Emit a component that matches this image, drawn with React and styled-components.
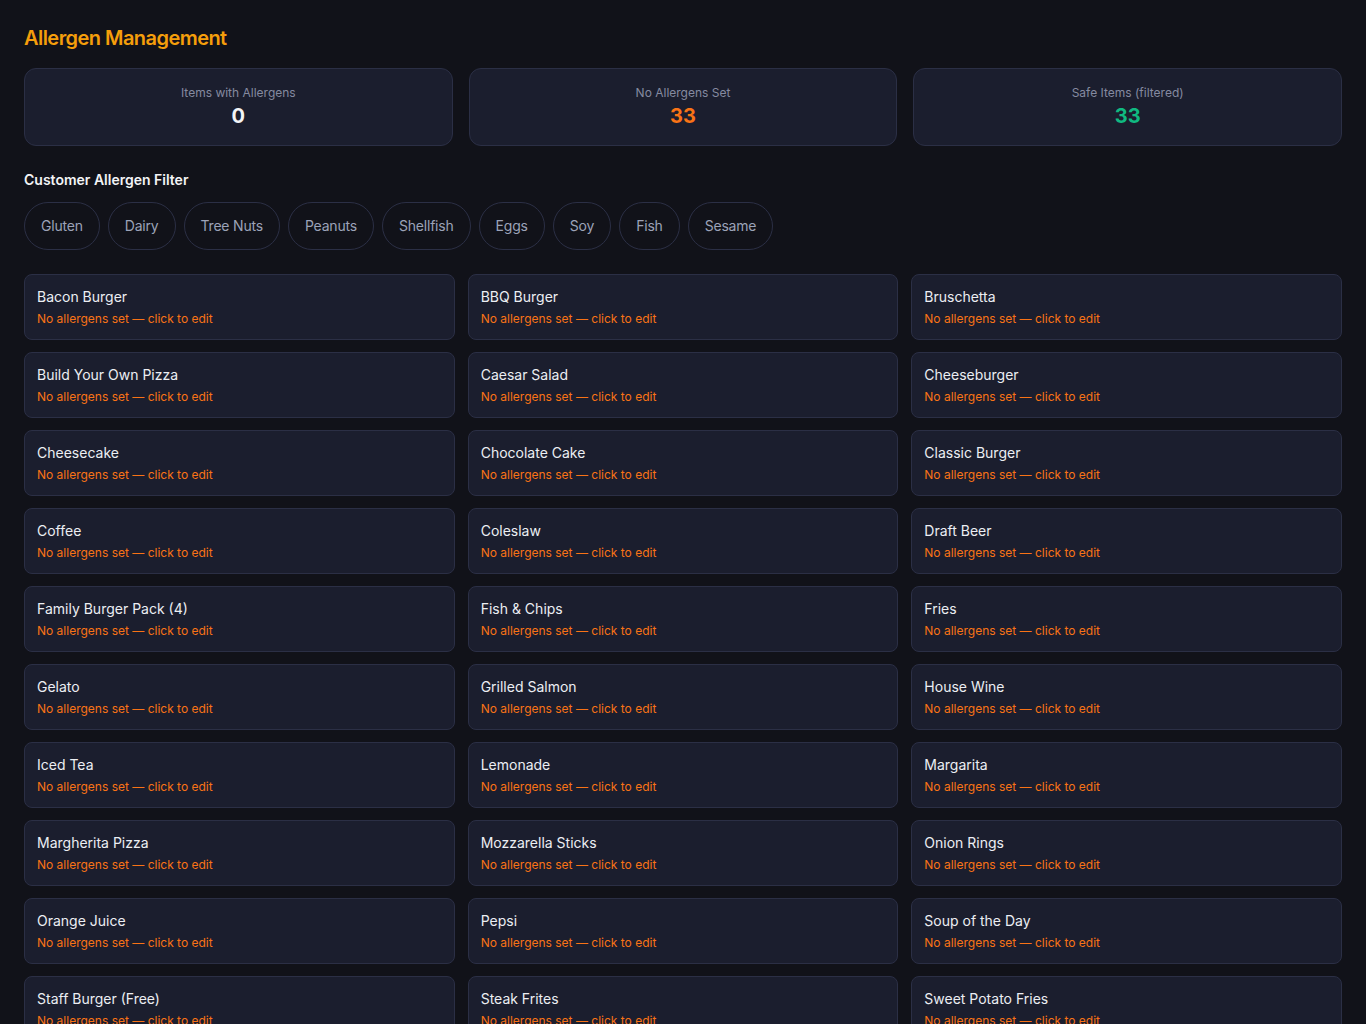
import React from "react";
import styled, { createGlobalStyle } from "styled-components";

const GlobalStyle = createGlobalStyle`
  html, body {
    margin: 0;
    padding: 0;
    background: #111219;
  }
  body {
    font-family: Inter, "Noto Sans", "Liberation Sans", sans-serif;
    color: #e5e7eb;
  }
  * { box-sizing: border-box; }
`;

const Page = styled.div`
  padding: 24px;
  min-height: 100vh;
  background: #111219;
`;

const Title = styled.h1`
  margin: 0 0 16px;
  font-size: 20px;
  line-height: 28px;
  font-weight: 600;
  letter-spacing: -0.55px;
  color: #f59e0b;
`;

const StatRow = styled.div`
  display: grid;
  grid-template-columns: repeat(3, 1fr);
  gap: 16px;
`;

const StatCard = styled.div`
  height: 78px;
  background: #1b1e2e;
  border: 1px solid #2b2f45;
  border-radius: 12px;
  display: flex;
  flex-direction: column;
  align-items: center;
  justify-content: center;
`;

const StatLabel = styled.div`
  font-size: 12px;
  line-height: 16px;
  color: #858aa0;
  margin-bottom: 1px;
`;

const StatValue = styled.div`
  font-size: 20px;
  line-height: 28px;
  font-weight: 700;
  color: ${(p) => p.color};
`;

const SectionTitle = styled.h2`
  margin: 24px 0 12px;
  font-size: 14px;
  line-height: 20px;
  font-weight: 600;
  color: #f3f4f6;
`;

const PillRow = styled.div`
  display: flex;
  flex-wrap: wrap;
  gap: 8px;
`;

const Pill = styled.button`
  height: 48px;
  padding: 0 16px 1px;
  border-radius: 999px;
  border: 1px solid #2b2f45;
  background: transparent;
  color: #9ca3b8;
  font-family: inherit;
  font-size: 14px;
  letter-spacing: -0.2px;
  cursor: pointer;
`;

const MenuGrid = styled.div`
  margin-top: 24px;
  display: grid;
  grid-template-columns: repeat(3, 1fr);
  gap: 12px 13px;
`;

const ItemCard = styled.div`
  height: 66px;
  padding: 12px;
  background: #1b1e2e;
  border: 1px solid #2b2f45;
  border-radius: 8px;
  cursor: pointer;
`;

const ItemName = styled.div`
  font-size: 14px;
  line-height: 20px;
  font-weight: 400;
  color: #eceef3;
  margin-bottom: 4px;
`;

const ItemNote = styled.div`
  font-size: 12px;
  line-height: 16px;
  color: #f97316;
`;

const allergens = ["Gluten", "Dairy", "Tree Nuts", "Peanuts", "Shellfish", "Eggs", "Soy", "Fish", "Sesame"];

const items = [
  "Bacon Burger", "BBQ Burger", "Bruschetta",
  "Build Your Own Pizza", "Caesar Salad", "Cheeseburger",
  "Cheesecake", "Chocolate Cake", "Classic Burger",
  "Coffee", "Coleslaw", "Draft Beer",
  "Family Burger Pack (4)", "Fish & Chips", "Fries",
  "Gelato", "Grilled Salmon", "House Wine",
  "Iced Tea", "Lemonade", "Margarita",
  "Margherita Pizza", "Mozzarella Sticks", "Onion Rings",
  "Orange Juice", "Pepsi", "Soup of the Day",
  "Staff Burger (Free)", "Steak Frites", "Sweet Potato Fries",
  "Tiramisu", "Veggie Burger", "Wings",
];

const stats = [
  { label: "Items with Allergens", value: 0, color: "#f3f4f6" },
  { label: "No Allergens Set", value: 33, color: "#f97316" },
  { label: "Safe Items (filtered)", value: 33, color: "#10b981" },
];

export default function App() {
  return (
    <Page>
      <GlobalStyle />
      <Title>Allergen Management</Title>
      <StatRow>
        {stats.map((s) => (
          <StatCard key={s.label}>
            <StatLabel>{s.label}</StatLabel>
            <StatValue color={s.color}>{s.value}</StatValue>
          </StatCard>
        ))}
      </StatRow>
      <SectionTitle>Customer Allergen Filter</SectionTitle>
      <PillRow>
        {allergens.map((a) => (
          <Pill key={a}>{a}</Pill>
        ))}
      </PillRow>
      <MenuGrid>
        {items.map((name) => (
          <ItemCard key={name}>
            <ItemName>{name}</ItemName>
            <ItemNote>No allergens set — click to edit</ItemNote>
          </ItemCard>
        ))}
      </MenuGrid>
    </Page>
  );
}
